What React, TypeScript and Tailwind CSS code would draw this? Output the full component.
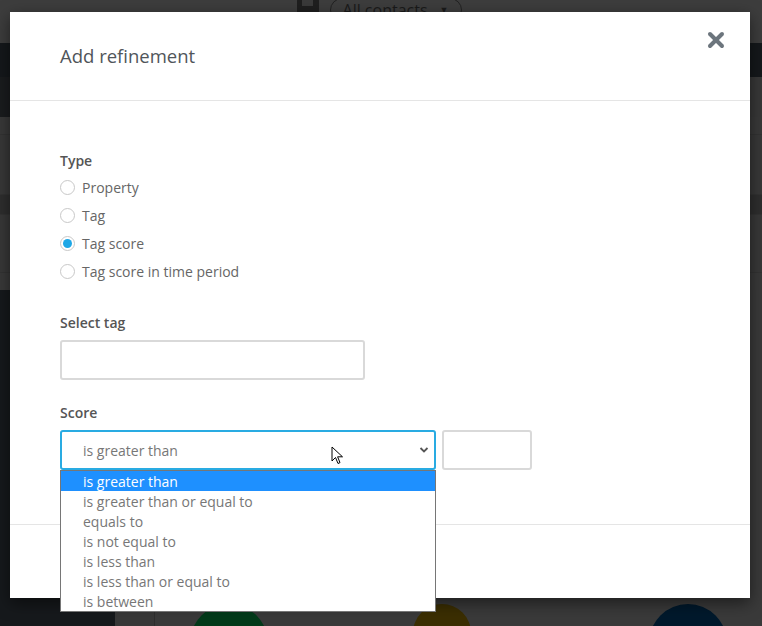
import { X } from "lucide-react"

const options = [
  "is greater than",
  "is greater than or equal to",
  "equals to",
  "is not equal to",
  "is less than",
  "is less than or equal to",
  "is between",
]

const types = ["Property", "Tag", "Tag score", "Tag score in time period"]

function Radio({ label, checked }: { label: string; checked?: boolean }) {
  return (
    <label className="flex h-7 items-center gap-[7px]">
      <span className="flex h-[15px] w-[15px] items-center justify-center rounded-full border border-[#c8c8c8] bg-white">
        {checked && <span className="h-[9px] w-[9px] rounded-full bg-[#1ea7e6]" />}
      </span>
      <span className="text-[14px] text-[#666]">{label}</span>
    </label>
  )
}

function Backdrop() {
  return (
    <div className="flex h-full flex-col bg-[#3b3b3b]">
      <div className="flex h-[43px] shrink-0 justify-center bg-[#3d3d3d]">
        <div className="ml-[-4px] flex -translate-y-[12px] items-center gap-[11px]">
          <svg width="22" height="22" viewBox="0 0 22 22">
            <rect x="0" y="0" width="22" height="22" rx="2" fill="#1f1f1f" />
            <rect x="5" y="0" width="11" height="7" fill="#3a3a3a" />
          </svg>
          <div className="flex h-[24px] w-[132px] items-center justify-center gap-3 rounded-full border border-[#222] text-[16px] text-[#1a1a1a]">
            All contacts <span className="text-[9px]">▼</span>
          </div>
        </div>
      </div>
      <div className="h-[34px] shrink-0 bg-[#15181b]" />
      <div className="flex h-[40px] shrink-0">
        <div className="w-[120px] bg-[#1a1c1e]" />
        <div className="flex-1 bg-[#383838]" />
      </div>
      <div className="h-[18px] shrink-0 border-b border-[#333] bg-[#393939]" />
      <div className="h-[60px] shrink-0 border-b border-[#333] bg-[#383838]" />
      <div className="h-[20px] shrink-0 border-b border-[#333] bg-[#2e2e2e]" />
      <div className="h-[58px] shrink-0 border-b border-[#333] bg-[#383838]" />
      <div className="h-[17px] shrink-0 bg-[#393939]" />
      <div className="flex min-h-0 flex-1">
        <div className="w-[115px] bg-[#16191c]" />
        <div className="w-[40px] border-r border-[#2e2e2e] bg-[#383838]" />
        <div className="flex flex-1 flex-col justify-end bg-[#3a3a3a]">
          <div className="flex h-[22px] items-start overflow-hidden">
            <div className="ml-[35px] h-[80px] w-[78px] rounded-full bg-[#033a1a]" />
            <div className="ml-[145px] h-[80px] w-[58px] rounded-t-full bg-[#3b2e02]" />
            <div className="ml-[178px] h-[80px] w-[78px] rounded-full bg-[#01192c]" />
          </div>
        </div>
      </div>
    </div>
  )
}

function Cursor() {
  return (
    <svg width="14" height="20" viewBox="0 0 14 20" className="absolute left-[331px] top-[446px]">
      <path d="M1 1 L1 15 L4.5 11.5 L7 17.5 L9 16.6 L6.6 10.8 L11.5 10.8 Z" fill="#fff" stroke="#000" strokeWidth="1" strokeLinejoin="round" />
    </svg>
  )
}

export default function App() {
  return (
    <div
      className="relative h-[626px] w-[762px] overflow-hidden"
      style={{ fontFamily: '"Open Sans", "Noto Sans", sans-serif' }}
    >
      <Backdrop />

      <div className="absolute left-[10px] top-[12px] flex h-[586px] w-[740px] flex-col bg-white shadow-[0_5px_15px_rgba(0,0,0,0.5)]">
        <div className="relative flex h-[89px] shrink-0 items-center border-b border-[#e5e5e5] px-[50px]">
          <h2 className="text-[18.5px] text-[#50555a]">Add refinement</h2>
          <X className="absolute right-[22px] top-[16px] text-[#6c757d]" size={24} strokeWidth={4} />
        </div>

        <div className="flex-1 px-[50px] pt-[49px]">
          <div className="text-[14px] font-semibold text-[#555]">Type</div>
          <div className="mt-[2px] flex flex-col">
            {types.map((t) => (
              <Radio key={t} label={t} checked={t === "Tag score"} />
            ))}
          </div>

          <div className="mt-[27px] text-[14px] font-semibold text-[#555]">Select tag</div>
          <div className="mt-[7px] h-[40px] w-[305px] rounded-[3px] border-2 border-[#d9d9d9]" />

          <div className="mt-[22px] text-[14px] font-semibold text-[#555]">Score</div>
          <div className="mt-[7px] flex gap-[6px]">
            <div className="relative w-[376px]">
              <div className="flex h-[40px] items-center justify-between rounded-[3px] border-2 border-[#29abe2] pl-[21px] pr-[5px] text-[14px] text-[#777]">
                is greater than
                <svg width="10" height="8" viewBox="0 0 10 8">
                  <path d="M1.5 2 L5 5.5 L8.5 2" fill="none" stroke="#555" strokeWidth="1.8" />
                </svg>
              </div>
              <div className="absolute left-0 top-[40px] z-10 w-[376px] border border-[#767676] bg-white">
                {options.map((o, i) => (
                  <div
                    key={o}
                    className={
                      i === 0
                        ? "flex h-[20px] items-center bg-[#1e90ff] pl-[22px] text-[14px] text-white"
                        : "flex h-[20px] items-center pl-[22px] text-[14px] text-[#777]"
                    }
                  >
                    {o}
                  </div>
                ))}
              </div>
            </div>
            <div className="h-[40px] w-[90px] rounded-[3px] border-2 border-[#d9d9d9]" />
          </div>
        </div>

        <div className="h-[74px] shrink-0 border-t border-[#e5e5e5]" />
      </div>

      <Cursor />
    </div>
  )
}
